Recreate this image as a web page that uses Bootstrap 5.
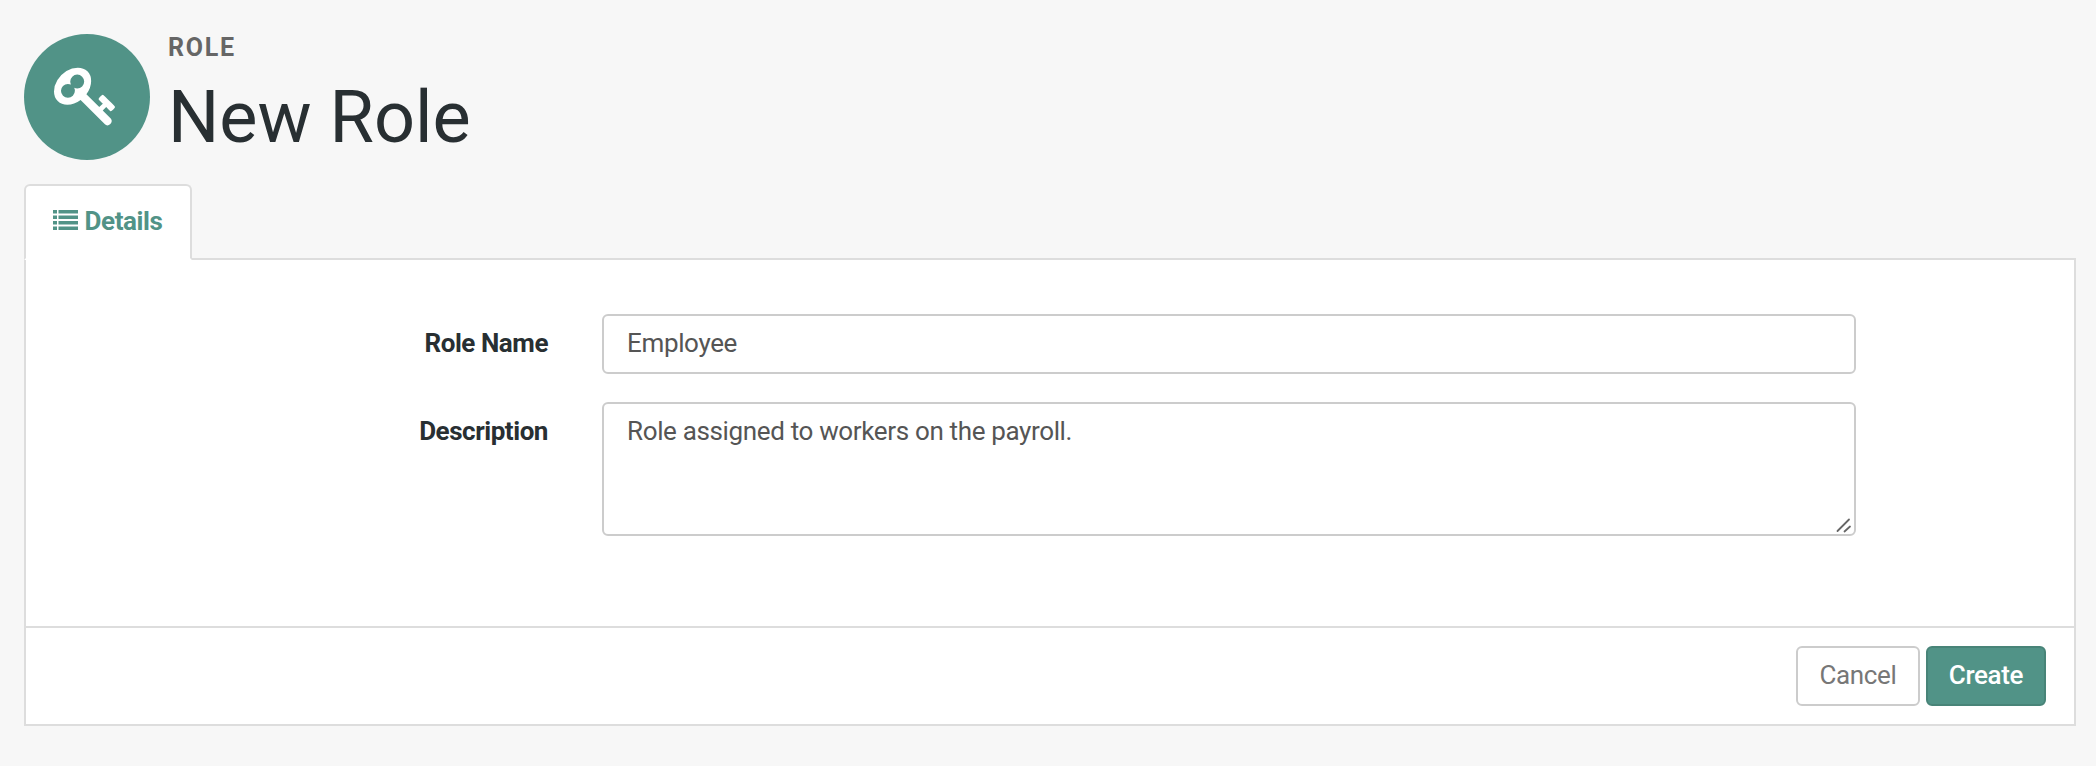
<!DOCTYPE html>
<html lang="en">
<head>
<meta charset="utf-8">
<meta name="viewport" content="width=device-width, initial-scale=1">
<title>New Role</title>
<link rel="stylesheet" href="https://cdn.jsdelivr.net/npm/bootstrap@5.3.0/dist/css/bootstrap.min.css">
<style>
body{background:#f7f7f7;color:#282f32;font-family:Roboto,sans-serif;font-size:26px;line-height:36px}
.page{padding:34px 20px 0 24px}
.role-icon{width:126px;height:126px;background:#519387;color:#fff}
.role-icon svg{margin:-4px 0 0 -1px}
.eyebrow{font-size:25px;line-height:30px;letter-spacing:1.7px;color:#666;margin:-1px 0 0 2px}
.page-title{font-size:72px;line-height:80px;font-weight:400;margin:15px 0 0 2px}
.tabs{--bs-nav-tabs-border-width:2px;border:0;margin-top:24px;--bs-nav-tabs-border-radius:6px}
.tabs .nav-link,.tabs .nav-link.active{width:168px;height:76px;margin-bottom:-2px;padding:17px 0 0 27px;border:2px solid #ddd;border-bottom-color:#fff;background:#fff;color:#519387;line-height:36px;letter-spacing:-.4px;gap:6.500px;position:relative;z-index:1}
.panel{border:2px solid #ddd;border-radius:0;height:468px;background:#fff;--bs-card-cap-bg:#fff}
.panel .card-body{padding:54px 218px 0 0}
.field{display:grid;grid-template-columns:522px 1fr;column-gap:54px;margin-bottom:28px}
.field label{text-align:right;padding-top:11px;letter-spacing:-.45px}
.field .form-control{border:2px solid #ccc;border-radius:6px;padding:9px 23px 11px;height:60px;font-size:26px;line-height:36px;letter-spacing:-.35px;color:#555;background:#fff}
.field textarea.form-control{height:134px;resize:none;display:block}
.grip{right:4px;bottom:3px}
.panel .card-footer{height:98px;border-top:2px solid #ddd;padding:18px 28px 0 0;gap:6px}
.act{height:60px;border-width:2px;border-radius:6px;font-size:26px;line-height:36px;letter-spacing:-.35px;padding:9px 0 11px}
.act-cancel{width:124px;border-color:#ccc;color:#777;background:#fff}
.act-create{width:120px;border-color:#488478;color:#fff;background:#519387;font-weight:500}
</style>
</head>
<body>
<main class="page">
  <header class="d-flex">
    <div class="role-icon rounded-circle d-flex align-items-center justify-content-center flex-shrink-0">
      <svg width="65" height="65" viewBox="0 0 1792 1792" fill="currentColor" aria-hidden="true"><path d="M832 512q0-80-56-136t-136-56-136 56-56 136q0 42 19 83-41-19-83-19-80 0-136 56t-56 136 56 136 136 56 136-56 56-136q0-42-19-83 41 19 83 19 80 0 136-56t56-136zm851 704q0 17-49 66t-66 49q-9 0-28.500-16t-36.500-33-38.500-40-24.500-26l-96 96 220 220q28 28 28 68 0 42-39 81t-81 39q-40 0-68-28l-671-671q-176 131-365 131-163 0-265.500-102.500t-102.500-265.500q0-160 95-313t248-248 313-95q163 0 265.500 102.500t102.500 265.500q0 189-131 365l355 355 96-96q-3-3-26-24.500t-40-38.500-33-36.500-16-28.500q0-17 49-66t66-49q13 0 23 10 6 6 46 44.500t82 79.500 86.500 86 73 78 28.500 41z"/></svg>
    </div>
    <div class="ps-3">
      <div class="eyebrow fw-bold">ROLE</div>
      <h1 class="page-title">New Role</h1>
    </div>
  </header>
  <ul class="nav nav-tabs tabs">
    <li class="nav-item"><a class="nav-link active fw-bold d-flex" href="#details">
      <svg width="25" height="20" viewBox="0 0 25 20" style="margin-top:7px" fill="currentColor" aria-hidden="true"><path d="M0 0h4v3.500H0zM5.500 0H25v3.500H5.500zM0 5.500h4V9H0zM5.500 5.500H25V9H5.500zM0 11h4v3.500H0zM5.500 11H25v3.500H5.500zM0 16.500h4V20H0zM5.500 16.500H25V20H5.500z"/></svg>
      <span>Details</span></a></li>
  </ul>
  <form class="card panel" id="details">
    <div class="card-body">
      <div class="field"><label class="fw-bold" for="role-name">Role Name</label><input class="form-control" id="role-name" value="Employee"></div>
      <div class="field"><label class="fw-bold" for="description">Description</label>
        <div class="position-relative"><textarea class="form-control" id="description">Role assigned to workers on the payroll.</textarea>
          <svg class="grip position-absolute" width="16" height="16" viewBox="0 0 16 16" stroke="#666" stroke-width="1.800" stroke-linecap="round" aria-hidden="true"><path d="M1.500 14 13 2.500M8.500 14.500l5.500-5"/></svg>
        </div>
      </div>
    </div>
    <div class="card-footer d-flex justify-content-end">
      <button type="button" class="btn act act-cancel">Cancel</button>
      <button type="button" class="btn act act-create">Create</button>
    </div>
  </form>
</main>
<script src="https://cdn.jsdelivr.net/npm/bootstrap@5.3.0/dist/js/bootstrap.bundle.min.js"></script>
</body>
</html>
